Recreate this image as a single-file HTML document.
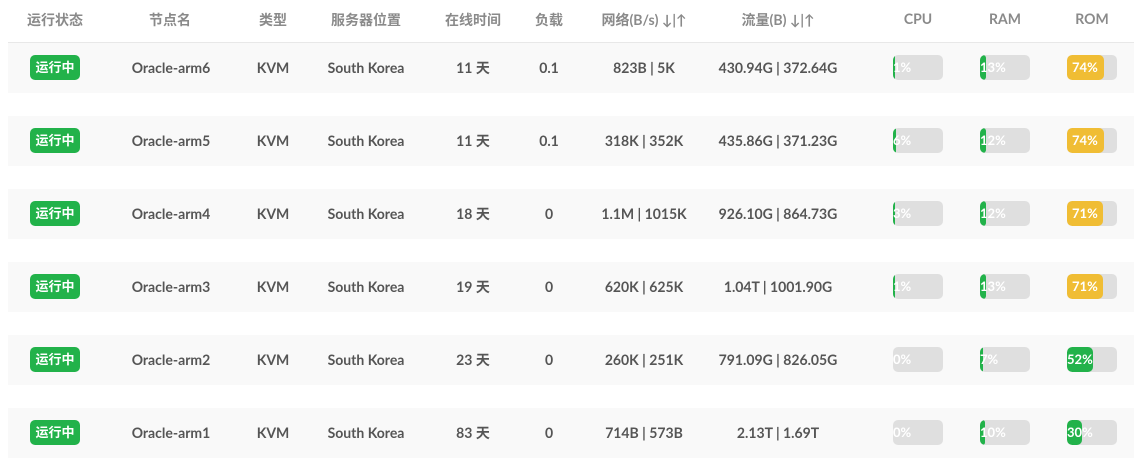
<!DOCTYPE html>
<html><head><meta charset="utf-8"><style>
body{margin:0;width:1142px;height:464px;background:#fff;font-family:"Lato","Liberation Sans","Noto Sans CJK SC",sans-serif;position:relative;overflow:hidden}
.h{position:absolute;top:10px;font-size:14px;font-weight:bold;color:#8a8a8a;transform:translateX(-50%);white-space:nowrap}
.line{position:absolute;left:8px;width:1126px;top:42px;height:1px;background:#e8e8e8}
.row{position:absolute;left:8px;width:1126px;height:50px;background:#f9f9f9}
.c{position:absolute;top:0;line-height:50px;font-size:14px;font-weight:bold;color:#555;transform:translateX(-50%);white-space:nowrap}
.b{position:absolute;left:22px;top:12px;width:50px;height:25px;border-radius:5px;background:#22b24a;color:#fff;font-size:13px;font-weight:bold;line-height:25px;text-align:center}
.bar{position:absolute;top:12px;width:50px;height:25px;border-radius:5px;background:#dfdfdf;overflow:hidden}
.f{position:absolute;left:0;top:0;height:25px;border-radius:5px;background:#22b24a}
.y{background:#f0bd34}
.t{position:absolute;left:0;top:0;line-height:25px;font-size:13px;font-weight:bold;color:#fff;white-space:nowrap}
</style></head><body>
<div class="h" style="left:55px">运行状态</div>
<div class="h" style="left:170px">节点名</div>
<div class="h" style="left:273px">类型</div>
<div class="h" style="left:366px">服务器位置</div>
<div class="h" style="left:473px">在线时间</div>
<div class="h" style="left:549px">负载</div>
<div class="h" style="left:644px">网络(B/s) ↓|↑</div>
<div class="h" style="left:778px">流量(B) ↓|↑</div>
<div class="h" style="left:918px">CPU</div>
<div class="h" style="left:1005px">RAM</div>
<div class="h" style="left:1092px">ROM</div>
<div class="line"></div>

<div class="row" style="top:43px"><div class="b">运行中</div>
<div class="c" style="left:163px">Oracle-arm6</div><div class="c" style="left:265px">KVM</div><div class="c" style="left:358px">South Korea</div><div class="c" style="left:465px">11 天</div><div class="c" style="left:541px">0.1</div><div class="c" style="left:636px">823B | 5K</div><div class="c" style="left:770px">430.94G | 372.64G</div>
<div class="bar" style="left:885px"><div class="f" style="width:2px"></div><div class="t">1%</div></div>
<div class="bar" style="left:972px"><div class="f" style="width:6px"></div><div class="t">13%</div></div>
<div class="bar" style="left:1059px"><div class="f y" style="width:37px"></div><div class="t" style="left:5px">74%</div></div></div>

<div class="row" style="top:116px"><div class="b">运行中</div>
<div class="c" style="left:163px">Oracle-arm5</div><div class="c" style="left:265px">KVM</div><div class="c" style="left:358px">South Korea</div><div class="c" style="left:465px">11 天</div><div class="c" style="left:541px">0.1</div><div class="c" style="left:636px">318K | 352K</div><div class="c" style="left:770px">435.86G | 371.23G</div>
<div class="bar" style="left:885px"><div class="f" style="width:3px"></div><div class="t">6%</div></div>
<div class="bar" style="left:972px"><div class="f" style="width:6px"></div><div class="t">12%</div></div>
<div class="bar" style="left:1059px"><div class="f y" style="width:37px"></div><div class="t" style="left:5px">74%</div></div></div>

<div class="row" style="top:189px"><div class="b">运行中</div>
<div class="c" style="left:163px">Oracle-arm4</div><div class="c" style="left:265px">KVM</div><div class="c" style="left:358px">South Korea</div><div class="c" style="left:465px">18 天</div><div class="c" style="left:541px">0</div><div class="c" style="left:636px">1.1M | 1015K</div><div class="c" style="left:770px">926.10G | 864.73G</div>
<div class="bar" style="left:885px"><div class="f" style="width:2px"></div><div class="t">3%</div></div>
<div class="bar" style="left:972px"><div class="f" style="width:6px"></div><div class="t">12%</div></div>
<div class="bar" style="left:1059px"><div class="f y" style="width:36px"></div><div class="t" style="left:5px">71%</div></div></div>

<div class="row" style="top:262px"><div class="b">运行中</div>
<div class="c" style="left:163px">Oracle-arm3</div><div class="c" style="left:265px">KVM</div><div class="c" style="left:358px">South Korea</div><div class="c" style="left:465px">19 天</div><div class="c" style="left:541px">0</div><div class="c" style="left:636px">620K | 625K</div><div class="c" style="left:770px">1.04T | 1001.90G</div>
<div class="bar" style="left:885px"><div class="f" style="width:2px"></div><div class="t">1%</div></div>
<div class="bar" style="left:972px"><div class="f" style="width:6px"></div><div class="t">13%</div></div>
<div class="bar" style="left:1059px"><div class="f y" style="width:36px"></div><div class="t" style="left:5px">71%</div></div></div>

<div class="row" style="top:335px"><div class="b">运行中</div>
<div class="c" style="left:163px">Oracle-arm2</div><div class="c" style="left:265px">KVM</div><div class="c" style="left:358px">South Korea</div><div class="c" style="left:465px">23 天</div><div class="c" style="left:541px">0</div><div class="c" style="left:636px">260K | 251K</div><div class="c" style="left:770px">791.09G | 826.05G</div>
<div class="bar" style="left:885px"><div class="t">0%</div></div>
<div class="bar" style="left:972px"><div class="f" style="width:3px"></div><div class="t">7%</div></div>
<div class="bar" style="left:1059px"><div class="f" style="width:26px"></div><div class="t">52%</div></div></div>

<div class="row" style="top:408px"><div class="b">运行中</div>
<div class="c" style="left:163px">Oracle-arm1</div><div class="c" style="left:265px">KVM</div><div class="c" style="left:358px">South Korea</div><div class="c" style="left:465px">83 天</div><div class="c" style="left:541px">0</div><div class="c" style="left:636px">714B | 573B</div><div class="c" style="left:770px">2.13T | 1.69T</div>
<div class="bar" style="left:885px"><div class="t">0%</div></div>
<div class="bar" style="left:972px"><div class="f" style="width:5px"></div><div class="t">10%</div></div>
<div class="bar" style="left:1059px"><div class="f" style="width:15px"></div><div class="t">30%</div></div></div>
</body></html>
